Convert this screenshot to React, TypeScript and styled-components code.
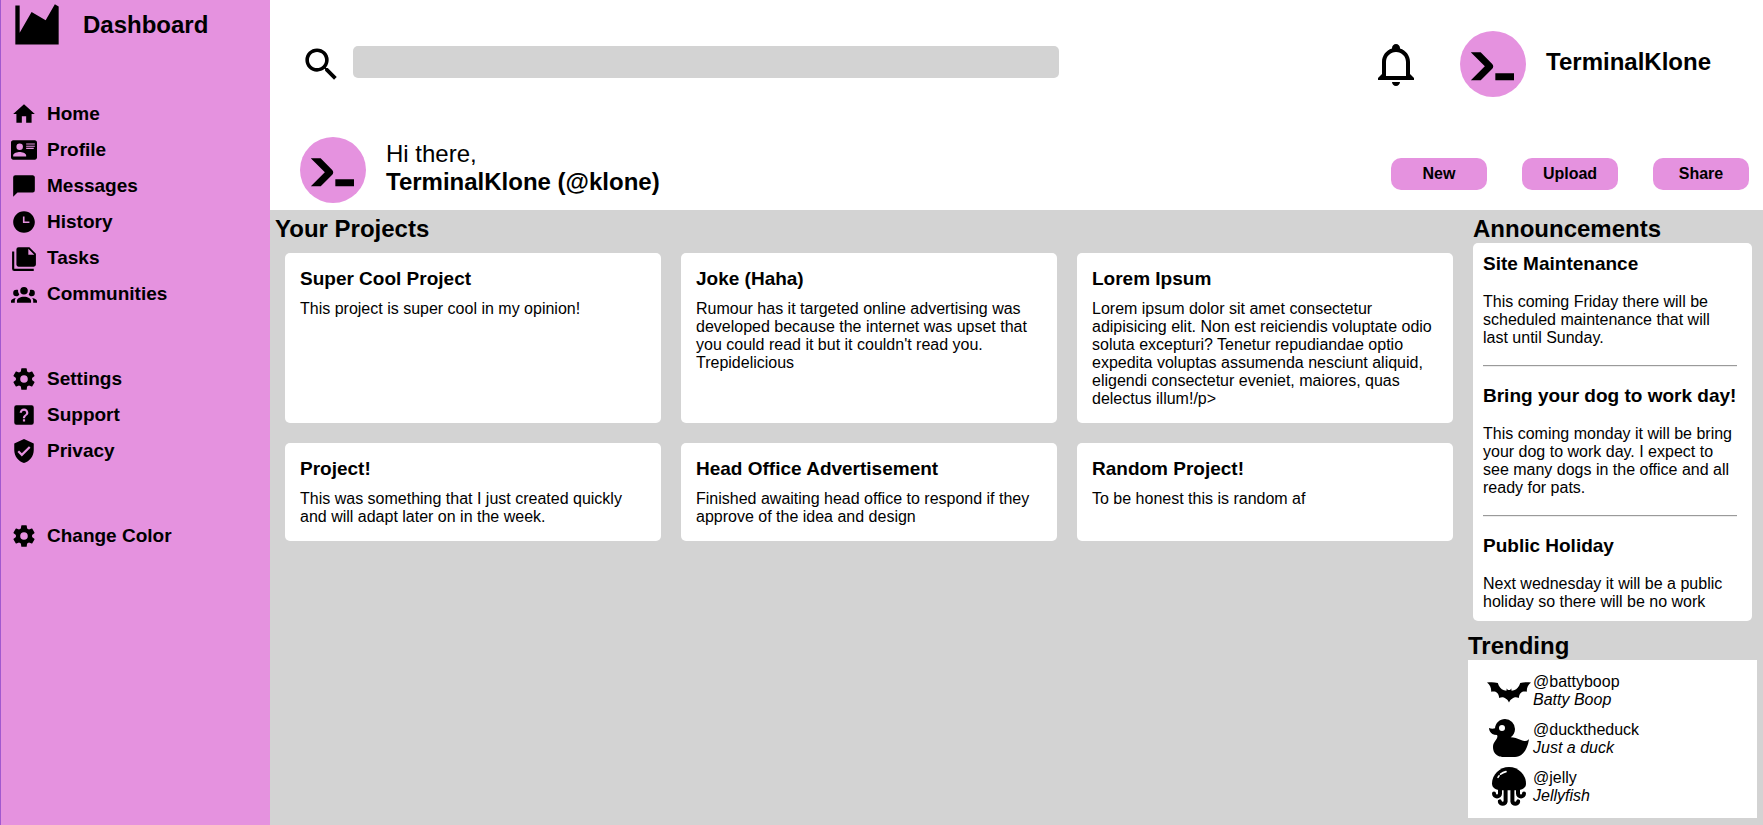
import React from "react";
import styled, { createGlobalStyle } from "styled-components";

const PINK = "#e592df";
const GREY = "#d3d3d3";

const GlobalStyle = createGlobalStyle`
  *, *::before, *::after { box-sizing: border-box; }
  body {
    margin: 0;
    font-family: "Liberation Sans", Arial, sans-serif;
    font-size: 16px;
    line-height: 18px;
    color: #000;
    background: ${GREY};
  }
  h1, h2, h3, p, ul { margin: 0; padding: 0; }
  ul { list-style: none; }
`;

const ICONS = {
  chart: "M2,3H4V15.54L9.5,6L16,9.78L20.24,2.45L22,3.45V21H2Z",
  home: "M10,20V14H14V20H19V12H22L12,3L2,12H5V20H10Z",
  profile:
    "M2,3H22C23.05,3 24,3.95 24,5V19C24,20.05 23.05,21 22,21H2C0.95,21 0,20.05 0,19V5C0,3.95 0.95,3 2,3M14,6V7H22V6H14M14,8V9H21.5L22,9V8H14M14,10V11H21V10H14M8,13.91C6,13.91 2,15 2,17V18H14V17C14,15 10,13.91 8,13.91M8,6A3,3 0 0,0 5,9A3,3 0 0,0 8,12A3,3 0 0,0 11,9A3,3 0 0,0 8,6Z",
  message: "M20,2H4A2,2 0 0,0 2,4V22L6,18H20A2,2 0 0,0 22,16V4C22,2.89 21.1,2 20,2Z",
  clock: "M12,2C6.5,2 2,6.5 2,12C2,17.5 6.5,22 12,22C17.5,22 22,17.5 22,12S17.5,2 12,2M17,13H11V7H12.5V11.5H17V13Z",
  notes:
    "M16,9H21.5L16,3.5V9M7,2H17L23,8V18A2,2 0 0,1 21,20H7C5.89,20 5,19.1 5,18V4A2,2 0 0,1 7,2M3,6V22H21V24H3A2,2 0 0,1 1,22V6H3Z",
  group:
    "M12,5.5A3.5,3.5 0 0,1 15.5,9A3.5,3.5 0 0,1 12,12.5A3.5,3.5 0 0,1 8.5,9A3.5,3.5 0 0,1 12,5.5M5,8C5.56,8 6.08,8.15 6.53,8.42C6.38,9.85 6.8,11.27 7.66,12.38C7.16,13.34 6.16,14 5,14A3,3 0 0,1 2,11A3,3 0 0,1 5,8M19,8A3,3 0 0,1 22,11A3,3 0 0,1 19,14C17.84,14 16.84,13.34 16.34,12.38C17.2,11.27 17.62,9.85 17.47,8.42C17.92,8.15 18.44,8 19,8M5.5,18.25C5.5,16.18 8.41,14.5 12,14.5C15.59,14.5 18.5,16.18 18.5,18.25V20H5.5V18.25M0,20V18.5C0,17.11 1.89,15.94 4.45,15.6C3.86,16.28 3.5,17.22 3.5,18.25V20H0M24,20H20.5V18.25C20.5,17.22 20.14,16.28 19.55,15.6C22.11,15.94 24,17.11 24,18.5V20Z",
  cog: "M12,15.5A3.5,3.5 0 0,1 8.5,12A3.5,3.5 0 0,1 12,8.5A3.5,3.5 0 0,1 15.5,12A3.5,3.5 0 0,1 12,15.5M19.43,12.97C19.47,12.65 19.5,12.33 19.5,12C19.5,11.67 19.47,11.34 19.43,11L21.54,9.37C21.73,9.22 21.78,8.95 21.66,8.73L19.66,5.27C19.54,5.05 19.27,4.96 19.05,5.05L16.56,6.05C16.04,5.66 15.5,5.32 14.87,5.07L14.5,2.42C14.46,2.18 14.25,2 14,2H10C9.75,2 9.54,2.18 9.5,2.42L9.13,5.07C8.5,5.32 7.96,5.66 7.44,6.05L4.95,5.05C4.73,4.96 4.46,5.05 4.34,5.27L2.34,8.73C2.21,8.95 2.27,9.22 2.46,9.37L4.57,11C4.53,11.34 4.5,11.67 4.5,12C4.5,12.33 4.53,12.65 4.57,12.97L2.46,14.63C2.27,14.78 2.21,15.05 2.34,15.27L4.34,18.73C4.46,18.95 4.73,19.03 4.95,18.95L7.44,17.94C7.96,18.34 8.5,18.68 9.13,18.93L9.5,21.58C9.54,21.82 9.75,22 10,22H14C14.25,22 14.46,21.82 14.5,21.58L14.87,18.93C15.5,18.67 16.04,18.34 16.56,17.94L19.05,18.95C19.27,19.03 19.54,18.95 19.66,18.73L21.66,15.27C21.78,15.05 21.73,14.78 21.54,14.63L19.43,12.97Z",
  help: "M11,18H13V16H11V18M12,6A4,4 0 0,0 8,10H10A2,2 0 0,1 12,8A2,2 0 0,1 14,10C14,12 11,11.75 11,15H13C13,12.75 16,12.5 16,10A4,4 0 0,0 12,6M5,3H19A2,2 0 0,1 21,5V19A2,2 0 0,1 19,21H5A2,2 0 0,1 3,19V5A2,2 0 0,1 5,3Z",
  shield:
    "M10,17L6,13L7.41,11.59L10,14.17L16.59,7.58L18,9M12,1L3,5V11C3,16.55 6.84,21.74 12,23C17.16,21.74 21,16.55 21,11V5L12,1Z",
  search:
    "M9.5,3A6.5,6.5 0 0,1 16,9.5C16,11.11 15.41,12.59 14.44,13.73L14.71,14H15.5L20.5,19L19,20.5L14,15.5V14.71L13.73,14.44C12.59,15.41 11.11,16 9.5,16A6.5,6.5 0 0,1 3,9.5A6.5,6.5 0 0,1 9.5,3M9.5,5C7,5 5,7 5,9.5C5,12 7,14 9.5,14C12,14 14,12 14,9.5C14,7 12,5 9.5,5Z",
  bell: "M10,21H14C14,22.1 13.1,23 12,23S10,22.1 10,21M21,19V20H3V19L5,17V11C5,7.9 7,5.2 10,4.3V4C10,2.9 10.9,2 12,2S14,2.9 14,4V4.3C17,5.2 19,7.9 19,11V17L21,19M17,11C17,8.2 14.8,6 12,6S7,8.2 7,11V18H17V11Z",
  console:
    "M13,19V16H21V19H13M8.5,13L2.47,7H6.71L11.67,11.95C12.25,12.54 12.25,13.5 11.67,14.07L6.74,19H2.5L8.5,13Z",
  bat: "M1,7.8C2.6,7.5 4.6,7.5 6.4,8C6.9,9.8 7.9,11.1 9.5,11.6C10.1,11.8 10.5,11.9 10.8,11.8L10.8,10.8L11.5,11.5H12.5L13.2,10.8L13.2,11.8C13.5,11.9 13.9,11.8 14.5,11.6C16.1,11.1 17.1,9.8 17.6,8C19.4,7.5 21.4,7.5 23,7.8C21.5,9 20.8,10.6 20.9,12.4C19.7,12 18.6,12.2 18,12.9C17.3,13.5 17,14.4 16.9,15.5C15.6,14.9 14.4,15.1 13.6,15.9C13,16 12.4,16.8 12,17.8C11.6,16.8 11,16 10.4,15.9C9.6,15.1 8.4,14.9 7.1,15.5C7,14.4 6.7,13.5 6,12.9C5.4,12.2 4.3,12 3.1,12.4C3.2,10.6 2.5,9 1,7.8Z",
  duck: "M8.5,5A1.5,1.5 0 0,0 7,6.5A1.5,1.5 0 0,0 8.5,8A1.5,1.5 0 0,0 10,6.5A1.5,1.5 0 0,0 8.5,5M10,2A5,5 0 0,1 15,7C15,8.7 14.15,10.2 12.86,11.1C14.44,11.25 16.22,11.61 18,12.5C21,14 22,12 22,12C22,12 21,21 15,21H9C9,21 4,21 4,16C4,13 7,12 6,10C2,10 2,6.5 2,6.5C3,7 4.24,7 5,6.65C5.19,4.05 7.36,2 10,2Z",
  jellyDome: "M12,2C7.3,2 3.5,5.8 3.5,10.3C3.5,12.6 5.5,13.6 8,13.6H16C18.5,13.6 20.5,12.6 20.5,10.3C20.5,5.8 16.7,2 12,2Z",
};

const Svg = styled.svg<{ $size: number }>`
  display: block;
  flex: none;
  width: ${(p) => p.$size}px;
  height: ${(p) => p.$size}px;
  fill: currentColor;
`;

type IconName = Exclude<keyof typeof ICONS, "jellyDome"> | "jelly";

function Icon({ name, size }: { name: IconName; size: number }) {
  if (name === "jelly") {
    return (
      <Svg $size={size} viewBox="0 0 24 24" aria-hidden="true">
        <path d={ICONS.jellyDome} />
        <path
          d="M7.5,13V15.2A1.5,1.5 0 0,1 4.5,15.2M16.5,13V15.2A1.5,1.5 0 0,0 19.5,15.2M10.3,13V19.2A1.5,1.5 0 0,1 7.4,19.2M13.7,13V19.2A1.5,1.5 0 0,0 16.6,19.2"
          fill="none"
          stroke="currentColor"
          strokeWidth="2"
          strokeLinecap="round"
        />
        <path d="M6.5,7.2L7,6.4M7.8,5.6Q9,4.6 10.5,4.3" fill="none" stroke="#fff" strokeWidth="0.8" strokeLinecap="round" />
      </Svg>
    );
  }
  return (
    <Svg $size={size} viewBox="0 0 24 24" aria-hidden="true">
      <path fillRule="evenodd" d={ICONS[name]} />
    </Svg>
  );
}

const Page = styled.div`
  display: grid;
  grid-template-columns: 270px minmax(0, 1fr);
  min-height: 100vh;
`;

const Sidebar = styled.aside`
  padding: 0 10px;
  background: ${PINK};
  border-left: 1px solid #a259cf;
`;

const Brand = styled.div`
  display: flex;
  align-items: center;
  gap: 20px;
  height: 50px;
  margin-bottom: 51px;
`;

const BrandName = styled.h1`
  font-size: 24px;
  line-height: 28px;
`;

const NavGroups = styled.nav`
  display: flex;
  flex-direction: column;
  gap: 59px;
`;

const NavList = styled.ul`
  display: flex;
  flex-direction: column;
  gap: 10px;
`;

const NavLink = styled.a`
  display: flex;
  align-items: center;
  gap: 10px;
  height: 26px;
  font-size: 19px;
  line-height: 22px;
  font-weight: bold;
  color: inherit;
  text-decoration: none;
`;

const Main = styled.div`
  display: flex;
  flex-direction: column;
`;

const Header = styled.header`
  background: #fff;
`;

const TopBar = styled.div`
  display: grid;
  grid-template-columns: minmax(0, 1fr) auto;
  align-items: center;
  min-height: 128px;
  padding: 0 52px 0 30px;
`;

const SearchArea = styled.form`
  display: grid;
  grid-template-columns: 43px 7fr 3fr;
  column-gap: 10px;
  align-items: center;
`;

const SearchInput = styled.input`
  width: 100%;
  height: 32px;
  margin-bottom: 4px;
  padding: 0 10px;
  border: 0;
  border-radius: 5px;
  background: ${GREY};
  font: inherit;
`;

const Account = styled.div`
  display: flex;
  align-items: center;
`;

const BellButton = styled.button`
  margin-right: 40px;
  padding: 0;
  border: 0;
  background: none;
  color: inherit;
`;

const Avatar = styled.div`
  display: flex;
  flex: none;
  align-items: center;
  justify-content: center;
  width: 66px;
  height: 66px;
  margin-right: 20px;
  border-radius: 50%;
  background: ${PINK};
`;

const UserName = styled.p<{ $bold?: boolean }>`
  font-size: 24px;
  line-height: 28px;
  font-weight: ${(p) => (p.$bold ? "bold" : "normal")};
`;

const NameBlock = styled.div`
  padding-bottom: 5px;
`;

const Greeting = styled.div`
  display: flex;
  align-items: center;
  padding: 9px 14px 7px 30px;
`;

const Actions = styled.div`
  display: flex;
  gap: 35px;
  margin-left: auto;
  padding-top: 8px;
`;

const ActionButton = styled.button`
  width: 96px;
  height: 32px;
  padding: 0 0 1px;
  border: 0;
  border-radius: 10px;
  background: ${PINK};
  color: inherit;
  font: inherit;
  font-weight: bold;
`;

const Content = styled.main`
  display: grid;
  grid-template-columns: minmax(0, 1fr) 300px;
  flex: 1;
  background: ${GREY};
`;

const SectionTitle = styled.h2`
  font-size: 24px;
  line-height: 28px;
`;

const Projects = styled.section`
  padding: 5px 10px 10px 5px;
`;

const ProjectGrid = styled.div`
  display: grid;
  grid-template-columns: repeat(3, minmax(0, 1fr));
  gap: 20px;
  padding: 10px 0 0 10px;
`;

const Card = styled.article`
  padding: 15px;
  border-radius: 5px;
  background: #fff;
`;

const CardTitle = styled.h3<{ $gap: number }>`
  margin-bottom: ${(p) => p.$gap}px;
  font-size: 19px;
  line-height: 22px;
`;

const Aside = styled.aside`
  padding: 5px 6px 7px 5px;
`;

const Announcements = styled.section`
  padding: 0 5px;
`;

const AnnouncementCard = styled.div`
  padding: 10px 15px 10px 10px;
  border-radius: 5px;
  background: #fff;
`;

const Rule = styled.hr`
  margin: 18px 0;
  border: 0;
  border-top: 1px solid #9a9a9a;
  border-bottom: 1px solid #ededed;
`;

const Trending = styled.section`
  margin-top: 11px;
`;

const TrendingList = styled.ul`
  padding: 7px 17px;
  background: #fff;
`;

const TrendingItem = styled.li`
  display: flex;
  align-items: center;
  height: 48px;
`;

const FullName = styled.p`
  font-style: italic;
`;

const NAV: { icon: IconName; label: string }[][] = [
  [
    { icon: "home", label: "Home" },
    { icon: "profile", label: "Profile" },
    { icon: "message", label: "Messages" },
    { icon: "clock", label: "History" },
    { icon: "notes", label: "Tasks" },
    { icon: "group", label: "Communities" },
  ],
  [
    { icon: "cog", label: "Settings" },
    { icon: "help", label: "Support" },
    { icon: "shield", label: "Privacy" },
  ],
  [{ icon: "cog", label: "Change Color" }],
];

const PROJECTS = [
  { title: "Super Cool Project", text: "This project is super cool in my opinion!" },
  {
    title: "Joke (Haha)",
    text: "Rumour has it targeted online advertising was developed because the internet was upset that you could read it but it couldn't read you. Trepidelicious",
  },
  {
    title: "Lorem Ipsum",
    text: "Lorem ipsum dolor sit amet consectetur adipisicing elit. Non est reiciendis voluptate odio soluta excepturi? Tenetur repudiandae optio expedita voluptas assumenda nesciunt aliquid, eligendi consectetur eveniet, maiores, quas delectus illum!/p>",
  },
  { title: "Project!", text: "This was something that I just created quickly and will adapt later on in the week." },
  {
    title: "Head Office Advertisement",
    text: "Finished awaiting head office to respond if they approve of the idea and design",
  },
  { title: "Random Project!", text: "To be honest this is random af" },
];

const ANNOUNCEMENTS = [
  {
    title: "Site Maintenance",
    text: "This coming Friday there will be scheduled maintenance that will last until Sunday.",
  },
  {
    title: "Bring your dog to work day!",
    text: "This coming monday it will be bring your dog to work day. I expect to see many dogs in the office and all ready for pats.",
  },
  { title: "Public Holiday", text: "Next wednesday it will be a public holiday so there will be no work" },
];

const TRENDING: { icon: IconName; handle: string; name: string }[] = [
  { icon: "bat", handle: "@battyboop", name: "Batty Boop" },
  { icon: "duck", handle: "@ducktheduck", name: "Just a duck" },
  { icon: "jelly", handle: "@jelly", name: "Jellyfish" },
];

export default function App() {
  return (
    <>
      <GlobalStyle />
      <Page>
        <Sidebar>
          <Brand>
            <Icon name="chart" size={52} />
            <BrandName>Dashboard</BrandName>
          </Brand>
          <NavGroups>
            {NAV.map((group) => (
              <NavList key={group[0].label}>
                {group.map((item) => (
                  <li key={item.label}>
                    <NavLink href="#">
                      <Icon name={item.icon} size={26} />
                      {item.label}
                    </NavLink>
                  </li>
                ))}
              </NavList>
            ))}
          </NavGroups>
        </Sidebar>
        <Main>
          <Header>
            <TopBar>
              <SearchArea role="search">
                <label htmlFor="search" aria-label="Search">
                  <Icon name="search" size={43} />
                </label>
                <SearchInput id="search" type="text" />
              </SearchArea>
              <Account>
                <BellButton type="button" aria-label="Notifications">
                  <Icon name="bell" size={48} />
                </BellButton>
                <Avatar>
                  <Icon name="console" size={56} />
                </Avatar>
                <NameBlock>
                  <UserName $bold>TerminalKlone</UserName>
                </NameBlock>
              </Account>
            </TopBar>
            <Greeting>
              <Avatar>
                <Icon name="console" size={56} />
              </Avatar>
              <NameBlock>
                <UserName>Hi there,</UserName>
                <UserName $bold>TerminalKlone (@klone)</UserName>
              </NameBlock>
              <Actions>
                <ActionButton type="button">New</ActionButton>
                <ActionButton type="button">Upload</ActionButton>
                <ActionButton type="button">Share</ActionButton>
              </Actions>
            </Greeting>
          </Header>
          <Content>
            <Projects>
              <SectionTitle>Your Projects</SectionTitle>
              <ProjectGrid>
                {PROJECTS.map((project) => (
                  <Card key={project.title}>
                    <CardTitle $gap={10}>{project.title}</CardTitle>
                    <p>{project.text}</p>
                  </Card>
                ))}
              </ProjectGrid>
            </Projects>
            <Aside>
              <Announcements>
                <SectionTitle>Announcements</SectionTitle>
                <AnnouncementCard>
                  {ANNOUNCEMENTS.map((item, index) => (
                    <React.Fragment key={item.title}>
                      {index > 0 && <Rule />}
                      <CardTitle $gap={18}>{item.title}</CardTitle>
                      <p>{item.text}</p>
                    </React.Fragment>
                  ))}
                </AnnouncementCard>
              </Announcements>
              <Trending>
                <SectionTitle>Trending</SectionTitle>
                <TrendingList>
                  {TRENDING.map((user) => (
                    <TrendingItem key={user.handle}>
                      <Icon name={user.icon} size={48} />
                      <div>
                        <p>{user.handle}</p>
                        <FullName>{user.name}</FullName>
                      </div>
                    </TrendingItem>
                  ))}
                </TrendingList>
              </Trending>
            </Aside>
          </Content>
        </Main>
      </Page>
    </>
  );
}
